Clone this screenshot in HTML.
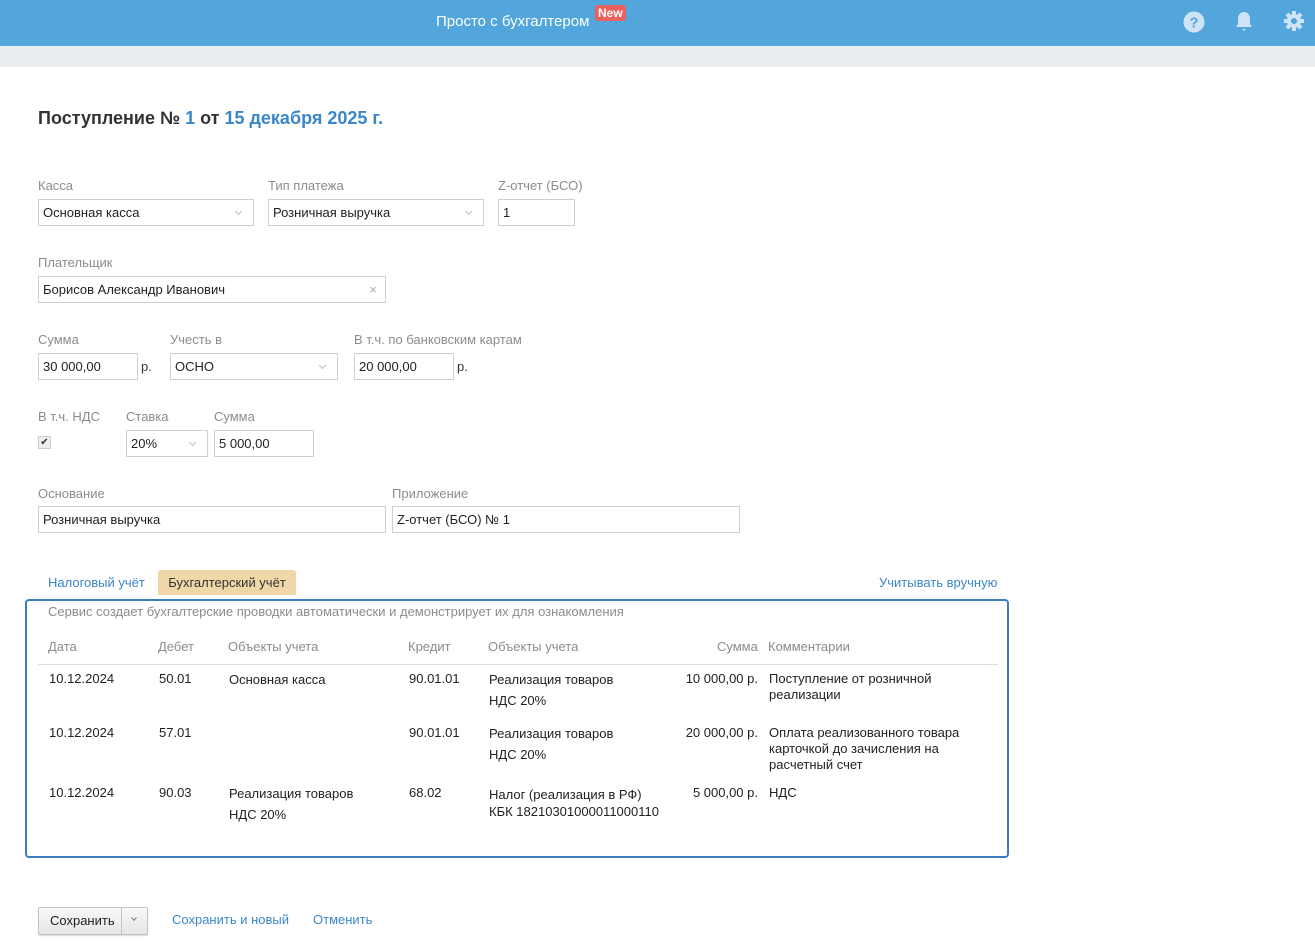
<!DOCTYPE html>
<html><head><meta charset="utf-8"><style>
*{box-sizing:border-box;margin:0;padding:0}
body{width:1315px;height:941px;position:relative;background:#fff;font-family:"Liberation Sans",Arial,sans-serif;font-size:13px;color:#333;overflow:hidden}
.a{position:absolute;white-space:nowrap}
.hd{position:absolute;left:0;top:0;width:1315px;height:46px;background:#52a6dc}
.band{position:absolute;left:0;top:46px;width:1315px;height:21px;background:#ebeef1}
.l{position:absolute;color:#8c8c8c;font-size:13px;line-height:16px;white-space:nowrap}
.in{position:absolute;border:1px solid #cfcfcf;height:27px;line-height:25px;padding-left:4px;font-size:13px;color:#222;white-space:nowrap;background:#fff}
.dd::after{content:"";position:absolute;right:12px;top:9px;width:4px;height:4px;border-right:1px solid #bbb;border-bottom:1px solid #bbb;transform:rotate(45deg)}
.lk{color:#3a86c8}
.box{position:absolute;left:25px;top:599px;width:984px;height:259px;border:2px solid #3d7cc0;border-radius:4px}
.th{position:absolute;top:639px;color:#8c8c8c;line-height:16px}
.td{position:absolute;line-height:21px;color:#222;white-space:nowrap}
.tc{position:absolute;line-height:16px;color:#222;white-space:nowrap}
</style></head><body>
<div class="hd"></div><div class="band"></div>
<div class="a" style="left:436px;top:13px;color:#fff;font-size:15px">Просто с бухгалтером</div>
<div class="a" style="left:595px;top:5px;background:#e9625f;color:#fff;font-size:12px;font-weight:bold;padding:1px 3px;border-radius:3px;line-height:14px">New</div>
<svg class="a" style="left:1183px;top:11px" width="22" height="22" viewBox="0 0 22 22"><circle cx="11" cy="11" r="10.5" fill="#cfe5f7"/><text x="11" y="16.5" text-anchor="middle" font-family="Liberation Sans" font-weight="bold" font-size="15" fill="#52a6dc">?</text></svg>
<svg class="a" style="left:1234px;top:10px" width="20" height="22" viewBox="0 0 20 22"><path d="M10 2c-4 0-6 3-6 7v5l-2 3h16l-2-3V9c0-4-2-7-6-7z" fill="#cfe5f7"/><path d="M8 19h4l-2 2z" fill="#cfe5f7"/></svg>
<svg class="a" style="left:1283px;top:10px" width="22" height="22" viewBox="0 0 22 22"><g fill="#cfe5f7"><circle cx="11" cy="11" r="7"/><rect x="9" y="1" width="4" height="20"/><rect x="1" y="9" width="20" height="4"/><rect x="9" y="1" width="4" height="20" transform="rotate(45 11 11)"/><rect x="9" y="1" width="4" height="20" transform="rotate(-45 11 11)"/></g><circle cx="11" cy="11" r="3" fill="#52a6dc"/></svg>

<div class="a" style="left:38px;top:108px;font-size:18px;font-weight:bold;color:#333">Поступление № <span class="lk">1</span> от <span class="lk">15 декабря 2025 г.</span></div>

<div class="l" style="left:38px;top:178px">Касса</div>
<div class="l" style="left:268px;top:178px">Тип платежа</div>
<div class="l" style="left:498px;top:178px">Z-отчет (БСО)</div>
<div class="in dd" style="left:38px;top:199px;width:216px">Основная касса</div>
<div class="in dd" style="left:268px;top:199px;width:216px">Розничная выручка</div>
<div class="in" style="left:498px;top:199px;width:77px">1</div>

<div class="l" style="left:38px;top:255px">Плательщик</div>
<div class="in" style="left:38px;top:276px;width:348px">Борисов Александр Иванович<span style="position:absolute;right:8px;color:#aaa">×</span></div>

<div class="l" style="left:38px;top:332px">Сумма</div>
<div class="l" style="left:170px;top:332px">Учесть в</div>
<div class="l" style="left:354px;top:332px">В т.ч. по банковским картам</div>
<div class="in" style="left:38px;top:353px;width:100px">30 000,00</div>
<div class="a" style="left:141px;top:359px">р.</div>
<div class="in dd" style="left:170px;top:353px;width:168px">ОСНО</div>
<div class="in" style="left:354px;top:353px;width:100px">20 000,00</div>
<div class="a" style="left:457px;top:359px">р.</div>

<div class="l" style="left:38px;top:409px">В т.ч. НДС</div>
<div class="l" style="left:126px;top:409px">Ставка</div>
<div class="l" style="left:214px;top:409px">Сумма</div>
<div class="a" style="left:38px;top:436px;width:13px;height:13px;border:1px solid #ccc;background:#eee;font-size:10px;line-height:11px;text-align:center;color:#333">✔</div>
<div class="in dd" style="left:126px;top:430px;width:82px">20%</div>
<div class="in" style="left:214px;top:430px;width:100px">5 000,00</div>

<div class="l" style="left:38px;top:486px">Основание</div>
<div class="l" style="left:392px;top:486px">Приложение</div>
<div class="in" style="left:38px;top:506px;width:348px">Розничная выручка</div>
<div class="in" style="left:392px;top:506px;width:348px">Z-отчет (БСО) № 1</div>

<div class="a lk" style="left:48px;top:575px">Налоговый учёт</div>
<div class="a" style="left:158px;top:570px;width:138px;height:25px;background:#f0d7a7;border-radius:3px 3px 0 0;line-height:25px;text-align:center;color:#333">Бухгалтерский учёт</div>
<div class="a lk" style="left:879px;top:575px">Учитывать вручную</div>

<div class="box"></div>
<div class="a" style="left:48px;top:604px;color:#8c8c8c">Сервис создает бухгалтерские проводки автоматически и демонстрирует их для ознакомления</div>
<div class="th" style="left:48px">Дата</div>
<div class="th" style="left:158px">Дебет</div>
<div class="th" style="left:228px">Объекты учета</div>
<div class="th" style="left:408px">Кредит</div>
<div class="th" style="left:488px">Объекты учета</div>
<div class="th" style="left:717px">Сумма</div>
<div class="th" style="left:768px">Комментарии</div>
<div class="a" style="left:38px;top:664px;width:960px;height:1px;background:#ddd"></div>

<div class="td" style="left:49px;top:668px">10.12.2024</div>
<div class="td" style="left:159px;top:668px">50.01</div>
<div class="td" style="left:229px;top:669px">Основная касса</div>
<div class="td" style="left:409px;top:668px">90.01.01</div>
<div class="td" style="left:489px;top:669px">Реализация товаров<br>НДС 20%</div>
<div class="td" style="left:650px;top:668px;width:108px;text-align:right">10 000,00 р.</div>
<div class="tc" style="left:769px;top:671px">Поступление от розничной<br>реализации</div>

<div class="td" style="left:49px;top:722px">10.12.2024</div>
<div class="td" style="left:159px;top:722px">57.01</div>
<div class="td" style="left:409px;top:722px">90.01.01</div>
<div class="td" style="left:489px;top:723px">Реализация товаров<br>НДС 20%</div>
<div class="td" style="left:650px;top:722px;width:108px;text-align:right">20 000,00 р.</div>
<div class="tc" style="left:769px;top:725px">Оплата реализованного товара<br>карточкой до зачисления на<br>расчетный счет</div>

<div class="td" style="left:49px;top:782px">10.12.2024</div>
<div class="td" style="left:159px;top:782px">90.03</div>
<div class="td" style="left:229px;top:783px">Реализация товаров<br>НДС 20%</div>
<div class="td" style="left:409px;top:782px">68.02</div>
<div class="tc" style="left:489px;top:786px;line-height:17px">Налог (реализация в РФ)<br>КБК 18210301000011000110</div>
<div class="td" style="left:650px;top:782px;width:108px;text-align:right">5 000,00 р.</div>
<div class="td" style="left:769px;top:782px">НДС</div>

<div class="a" style="left:38px;top:907px;width:110px;height:28px;border:1px solid #c4c4c4;border-radius:2px;background:linear-gradient(#f8f8f8,#e6e6e6);box-shadow:0 1px 1px rgba(0,0,0,.15)"></div>
<div class="a" style="left:50px;top:913px;color:#222">Сохранить</div>
<div class="a" style="left:121px;top:908px;width:1px;height:26px;background:#c4c4c4"></div>
<div class="a" style="left:132px;top:916px;width:4px;height:4px;border-right:1px solid #777;border-bottom:1px solid #777;transform:rotate(45deg)"></div>
<div class="a lk" style="left:172px;top:912px">Сохранить и новый</div>
<div class="a lk" style="left:313px;top:912px">Отменить</div>
</body></html>
